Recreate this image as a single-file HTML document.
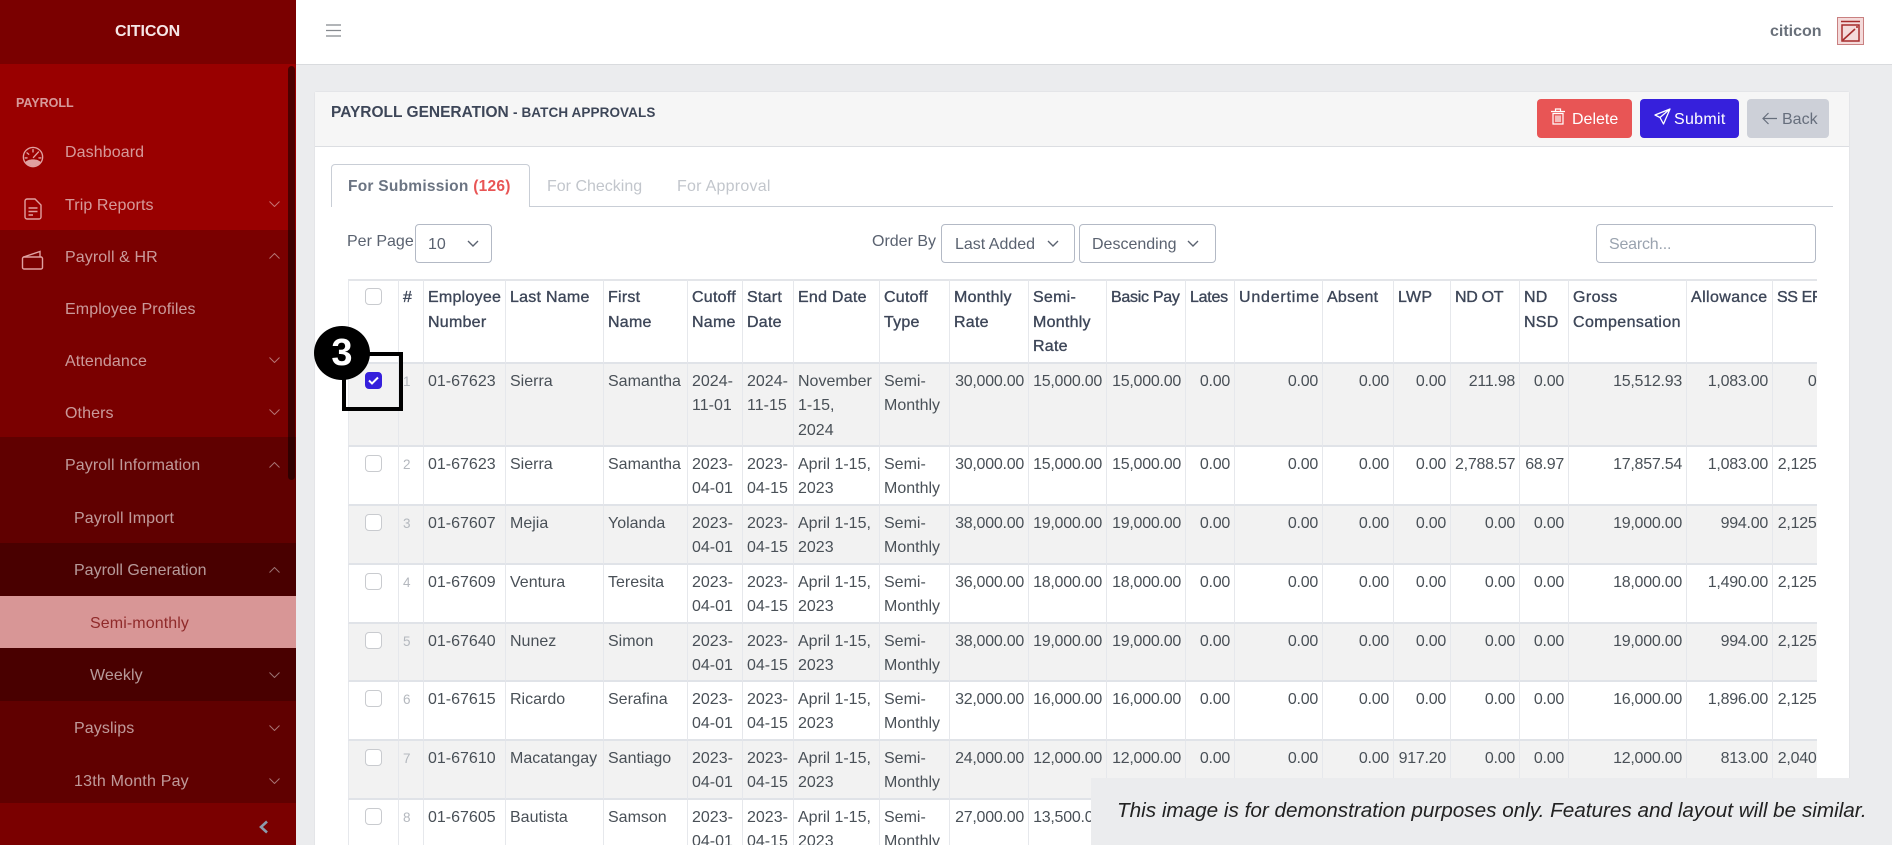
<!DOCTYPE html>
<html lang="en">
<head>
<meta charset="utf-8">
<title>Payroll Generation</title>
<style>
html,body{margin:0;padding:0;width:1892px;height:845px;overflow:hidden;background:#ebecee;font-family:"Liberation Sans",sans-serif;font-size:16px;color:#495057}
*{box-sizing:border-box}
#root{position:relative;width:1892px;height:845px;overflow:hidden;background:#ebecee}
.a{position:absolute}
.n{position:absolute;line-height:24px;white-space:nowrap;color:rgba(255,255,255,.6);letter-spacing:.1px}
.ch{position:absolute;left:269px;width:11px;height:6px;fill:none;stroke:rgba(255,255,255,.45);stroke-width:1}
.t{position:absolute;white-space:nowrap;line-height:24px}
.sel{position:absolute;top:224px;height:39px;border:1px solid #b3b9c5;border-radius:4px;background:#fff;line-height:39px;color:#5a6270;white-space:nowrap}
.sel svg{position:absolute;top:15px;width:12px;height:7px;fill:none;stroke:#5a6270;stroke-width:1.4}
.btn{position:absolute;top:99px;height:39px;border-radius:4px;line-height:41px;white-space:nowrap}
table{border-collapse:separate;border-spacing:0;table-layout:fixed;width:1495px;font-size:16px;line-height:24.7px;color:#495057}
td,th{padding:5.5px 4px 0;vertical-align:top;text-align:left;white-space:nowrap;overflow:hidden;border-right:1px solid #e6e8ec;border-bottom:2px solid #e0e3e8}
th{padding-top:5px;font-weight:400;color:#3d4658;-webkit-text-stroke:.35px #3d4658;letter-spacing:.25px;border-top:2px solid #e3e5e9}
tbody tr:nth-child(odd){background:#f2f2f2}
td.r{text-align:right;letter-spacing:-.25px}
td.i{font-size:13.5px;color:#b4b8be}
td.c,th.c{padding:0;border-left:1px solid #e6e8ec}
.cb{display:block;width:17px;height:17px;margin:8px 0 0 15.5px;border:1.3px solid #c9cbcf;border-radius:4px;background:#fff}
th .cb{margin-top:7px}
.cb.on{background:#3620dc;border-color:#3620dc;position:relative}
</style>
</head>
<body>
<div id="root">

<!-- top bar -->
<div class="a" style="left:296px;top:0;width:1596px;height:65px;background:#fff;border-bottom:1px solid #d9dbde"></div>
<svg class="a" style="left:326px;top:23px" width="15" height="15" viewBox="0 0 15 15" fill="none" stroke="#85898e" stroke-width="1.2"><path d="M0 2h15M0 7.500h15M0 13h15"/></svg>
<div class="t" style="left:1770px;top:20px;font-weight:700;color:#69707a">citicon</div>
<svg class="a" style="left:1837px;top:17px" width="27" height="28" viewBox="0 0 27 28" fill="none">
<rect x=".5" y=".5" width="26" height="27" fill="#f4dada" stroke="#c98080"/>
<path d="M4 4.500h19M5 8h17v16H5z" stroke="#a52a2a" stroke-width="1.500"/>
<path d="M6 23 L18 12" stroke="#a52a2a" stroke-width="1.600"/><circle cx="20" cy="10" r="1" fill="#a52a2a"/>
</svg>

<!-- sidebar -->
<div class="a" style="left:0;top:0;width:296px;height:845px;background:#7a0000;overflow:hidden">
  <div class="a" style="left:0;top:64px;width:296px;height:166px;background:#990000"></div>
  <div class="a" style="left:0;top:437px;width:296px;height:366px;background:#600000"></div>
  <div class="a" style="left:0;top:543px;width:296px;height:158px;background:#490000"></div>
  <div class="a" style="left:0;top:596px;width:296px;height:52px;background:#d89696"></div>
  <div class="a" style="left:288px;top:66px;width:7px;height:414px;border-radius:4px;background:rgba(0,0,0,.5)"></div>

  <div class="t" style="left:115px;top:20px;font-weight:700;color:#f5e6e6;font-size:16px;letter-spacing:-.1px">CITICON</div>
  <div class="t" style="left:16px;top:91px;font-weight:700;font-size:12.500px;color:rgba(255,255,255,.6)">PAYROLL</div>

  <svg class="a" style="left:21.500px;top:146px" width="22" height="22" viewBox="0 0 24 24" fill="none" stroke="#e0a0a0" stroke-width="1.500"><circle cx="12" cy="12" r="10.500"/><path d="M3.500 18C6 13.500 18 13.500 20.500 18 18.500 20.500 15.500 22 12 22S5.500 20.500 3.500 18z" fill="#e0a0a0" stroke="none"/><path d="M12 4v2.500M5.500 7.500l1.800 1.500M3.500 13h2M18 6.500L12.500 12.500M20.500 13h-2" stroke-linecap="round"/></svg>
  <svg class="a" style="left:24px;top:198px" width="18" height="22" viewBox="0 0 18 22" fill="none" stroke="#e0a0a0" stroke-width="1.400"><path d="M3 1h8l6 6v12a2 2 0 0 1-2 2H3a2 2 0 0 1-2-2V3a2 2 0 0 1 2-2z"/><path d="M4.500 10h9M4.500 13.500h9M4.500 17h4.500" stroke-width="1.600"/></svg>
  <svg class="a" style="left:21px;top:250px" width="23" height="20" viewBox="0 0 23 20" fill="none" stroke="#e0a0a0" stroke-width="1.400"><rect x="1.500" y="7" width="20" height="12" rx="1.500"/><path d="M2.500 7L19 1.500V7"/></svg>

  <div class="n" style="left:65px;top:141px">Dashboard</div>
  <div class="n" style="left:65px;top:194px">Trip Reports</div>
  <div class="n" style="left:65px;top:246px">Payroll &amp; HR</div>
  <div class="n" style="left:65px;top:298px">Employee Profiles</div>
  <div class="n" style="left:65px;top:350px">Attendance</div>
  <div class="n" style="left:65px;top:402px">Others</div>
  <div class="n" style="left:65px;top:454px">Payroll Information</div>
  <div class="n" style="left:74px;top:507px">Payroll Import</div>
  <div class="n" style="left:74px;top:559px;letter-spacing:0">Payroll Generation</div>
  <div class="n" style="left:90px;top:612px;color:#8f2a2a">Semi-monthly</div>
  <div class="n" style="left:90px;top:664px">Weekly</div>
  <div class="n" style="left:74px;top:717px">Payslips</div>
  <div class="n" style="left:74px;top:770px;letter-spacing:.2px">13th Month Pay</div>

  <svg class="ch" style="top:201px" viewBox="0 0 11 6"><path d="M.5.500l5 5 5-5"/></svg>
  <svg class="ch" style="top:253px" viewBox="0 0 11 6"><path d="M.5 5.500l5-5 5 5"/></svg>
  <svg class="ch" style="top:357px" viewBox="0 0 11 6"><path d="M.5.500l5 5 5-5"/></svg>
  <svg class="ch" style="top:409px" viewBox="0 0 11 6"><path d="M.5.500l5 5 5-5"/></svg>
  <svg class="ch" style="top:462px" viewBox="0 0 11 6"><path d="M.5 5.500l5-5 5 5"/></svg>
  <svg class="ch" style="top:567px" viewBox="0 0 11 6"><path d="M.5 5.500l5-5 5 5"/></svg>
  <svg class="ch" style="top:672px" viewBox="0 0 11 6"><path d="M.5.500l5 5 5-5"/></svg>
  <svg class="ch" style="top:725px" viewBox="0 0 11 6"><path d="M.5.500l5 5 5-5"/></svg>
  <svg class="ch" style="top:778px" viewBox="0 0 11 6"><path d="M.5.500l5 5 5-5"/></svg>
  <svg class="a" style="left:258px;top:820px" width="11" height="14" viewBox="0 0 11 14" fill="none" stroke="#8b9bab" stroke-width="2.600"><path d="M9 1.500L3 7l6 5.500"/></svg>
</div>

<!-- card -->
<div class="a" style="left:314px;top:91px;width:1536px;height:754px;background:#fff;border:1px solid #e4e5e8;border-bottom:none;border-radius:3px 3px 0 0"></div>
<div class="a" style="left:315px;top:92px;width:1534px;height:55px;background:#f6f6f6;border-bottom:1px solid #dcdee2"></div>
<div class="t" style="left:331px;top:101px;font-weight:700;color:#3d4658;font-size:15.500px;letter-spacing:0">PAYROLL GENERATION <span style="font-size:13.500px;letter-spacing:.1px">- BATCH APPROVALS</span></div>

<div class="btn" style="left:1537px;width:95px;background:#e85555;color:#fff;padding-left:35px">Delete</div>
<svg class="a" style="left:1551px;top:108px" width="14" height="17" viewBox="0 0 14 17" fill="none" stroke="#fff" stroke-width="1.200"><path d="M0 3.500h14M4.500 3.500V1h5v2.500M2 5.500h10v10.500H2zM5 7.500v6.500M7 7.500v6.500M9 7.500v6.500"/></svg>
<div class="btn" style="left:1640px;width:99px;background:#3620dc;color:#fff;padding-left:34px;letter-spacing:.3px">Submit</div>
<svg class="a" style="left:1654px;top:108px" width="17" height="17" viewBox="0 0 17 17" fill="none" stroke="#fff" stroke-width="1.300" stroke-linejoin="round"><path d="M16 1L1 7l5 2.500L9.500 16zM16 1L6 9.500"/></svg>
<div class="btn" style="left:1747px;width:82px;background:#cdd0d8;color:#666e7c;padding-left:35px">Back</div>
<svg class="a" style="left:1762px;top:112px" width="15" height="13" viewBox="0 0 15 13" fill="none" stroke="#666e7c" stroke-width="1.200"><path d="M15 6.500H1M6.500 1L1 6.500 6.500 12"/></svg>

<!-- tabs -->
<div class="a" style="left:331px;top:206px;width:1502px;height:1px;background:#c9ced6"></div>
<div class="a" style="left:331px;top:164px;width:199px;height:43px;background:#fff;border:1px solid #c9ced6;border-bottom:none;border-radius:4px 4px 0 0"></div>
<div class="t" style="left:348px;top:175px;font-weight:700;color:#6b7482;font-size:15.500px;letter-spacing:.25px">For Submission <span style="color:#e85555">(126)</span></div>
<div class="t" style="left:547px;top:175px;color:#c2c6cc">For Checking</div>
<div class="t" style="left:677px;top:175px;color:#c2c6cc;letter-spacing:.25px">For Approval</div>

<!-- filters -->
<div class="t" style="left:347px;top:230px;color:#5a6270">Per Page</div>
<div class="sel" style="left:415px;width:77px;padding-left:12px">10<svg style="left:51px" viewBox="0 0 12 7"><path d="M1 1l5 5 5-5"/></svg></div>
<div class="t" style="left:872px;top:230px;color:#5a6270">Order By</div>
<div class="sel" style="left:941px;width:134px;padding-left:13px">Last Added<svg style="left:105px" viewBox="0 0 12 7"><path d="M1 1l5 5 5-5"/></svg></div>
<div class="sel" style="left:1079px;width:137px;padding-left:12px">Descending<svg style="left:107px" viewBox="0 0 12 7"><path d="M1 1l5 5 5-5"/></svg></div>
<div class="sel" style="left:1596px;top:224px;width:220px;padding-left:12px;color:#9aa3af;letter-spacing:-.2px">Search...</div>

<!-- table -->
<div class="a" style="left:348px;top:279px;width:1469px;height:566px;overflow:hidden">
<table>
<colgroup>
<col style="width:51px"><col style="width:25px"><col style="width:82px"><col style="width:98px"><col style="width:84px"><col style="width:55px"><col style="width:51px"><col style="width:86px"><col style="width:70px"><col style="width:79px"><col style="width:78px"><col style="width:79px"><col style="width:49px"><col style="width:88px"><col style="width:71px"><col style="width:57px"><col style="width:69px"><col style="width:49px"><col style="width:118px"><col style="width:86px"><col style="width:70px">
</colgroup>
<thead>
<tr style="height:85px"><th class="c"><span class="cb"></span></th><th>#</th><th>Employee<br>Number</th><th>Last Name</th><th>First<br>Name</th><th>Cutoff<br>Name</th><th>Start<br>Date</th><th>End Date</th><th>Cutoff<br>Type</th><th>Monthly<br>Rate</th><th>Semi-<br>Monthly<br>Rate</th><th style="letter-spacing:-.28px">Basic Pay</th><th style="letter-spacing:-.25px">Lates</th><th style="letter-spacing:.78px">Undertime</th><th>Absent</th><th>LWP</th><th style="letter-spacing:-.3px">ND OT</th><th>ND<br>NSD</th><th style="letter-spacing:.4px">Gross<br>Compensation</th><th style="letter-spacing:.4px">Allowance</th><th style="letter-spacing:-.4px">SS ER</th></tr>
</thead>
<tbody>
<tr style="height:83px"><td class="c"><span class="cb on"><svg class="a" style="left:2px;top:3px" width="11" height="9" viewBox="0 0 11 9" fill="none" stroke="#fff" stroke-width="2"><path d="M1 4.500l3 3 6-6"/></svg></span></td><td class="i">1</td><td>01-67623</td><td>Sierra</td><td>Samantha</td><td>2024-<br>11-01</td><td>2024-<br>11-15</td><td>November<br>1-15,<br>2024</td><td>Semi-<br>Monthly</td><td class="r">30,000.00</td><td class="r">15,000.00</td><td class="r">15,000.00</td><td class="r">0.00</td><td class="r">0.00</td><td class="r">0.00</td><td class="r">0.00</td><td class="r">211.98</td><td class="r">0.00</td><td class="r">15,512.93</td><td class="r">1,083.00</td><td class="r">0.00</td></tr>
<tr style="height:59px"><td class="c"><span class="cb"></span></td><td class="i">2</td><td>01-67623</td><td>Sierra</td><td>Samantha</td><td>2023-<br>04-01</td><td>2023-<br>04-15</td><td>April 1-15,<br>2023</td><td>Semi-<br>Monthly</td><td class="r">30,000.00</td><td class="r">15,000.00</td><td class="r">15,000.00</td><td class="r">0.00</td><td class="r">0.00</td><td class="r">0.00</td><td class="r">0.00</td><td class="r">2,788.57</td><td class="r">68.97</td><td class="r">17,857.54</td><td class="r">1,083.00</td><td class="r">2,125.00</td></tr>
<tr style="height:59px"><td class="c"><span class="cb"></span></td><td class="i">3</td><td>01-67607</td><td>Mejia</td><td>Yolanda</td><td>2023-<br>04-01</td><td>2023-<br>04-15</td><td>April 1-15,<br>2023</td><td>Semi-<br>Monthly</td><td class="r">38,000.00</td><td class="r">19,000.00</td><td class="r">19,000.00</td><td class="r">0.00</td><td class="r">0.00</td><td class="r">0.00</td><td class="r">0.00</td><td class="r">0.00</td><td class="r">0.00</td><td class="r">19,000.00</td><td class="r">994.00</td><td class="r">2,125.00</td></tr>
<tr style="height:59px"><td class="c"><span class="cb"></span></td><td class="i">4</td><td>01-67609</td><td>Ventura</td><td>Teresita</td><td>2023-<br>04-01</td><td>2023-<br>04-15</td><td>April 1-15,<br>2023</td><td>Semi-<br>Monthly</td><td class="r">36,000.00</td><td class="r">18,000.00</td><td class="r">18,000.00</td><td class="r">0.00</td><td class="r">0.00</td><td class="r">0.00</td><td class="r">0.00</td><td class="r">0.00</td><td class="r">0.00</td><td class="r">18,000.00</td><td class="r">1,490.00</td><td class="r">2,125.00</td></tr>
<tr style="height:58px"><td class="c"><span class="cb"></span></td><td class="i">5</td><td>01-67640</td><td>Nunez</td><td>Simon</td><td>2023-<br>04-01</td><td>2023-<br>04-15</td><td>April 1-15,<br>2023</td><td>Semi-<br>Monthly</td><td class="r">38,000.00</td><td class="r">19,000.00</td><td class="r">19,000.00</td><td class="r">0.00</td><td class="r">0.00</td><td class="r">0.00</td><td class="r">0.00</td><td class="r">0.00</td><td class="r">0.00</td><td class="r">19,000.00</td><td class="r">994.00</td><td class="r">2,125.00</td></tr>
<tr style="height:59px"><td class="c"><span class="cb"></span></td><td class="i">6</td><td>01-67615</td><td>Ricardo</td><td>Serafina</td><td>2023-<br>04-01</td><td>2023-<br>04-15</td><td>April 1-15,<br>2023</td><td>Semi-<br>Monthly</td><td class="r">32,000.00</td><td class="r">16,000.00</td><td class="r">16,000.00</td><td class="r">0.00</td><td class="r">0.00</td><td class="r">0.00</td><td class="r">0.00</td><td class="r">0.00</td><td class="r">0.00</td><td class="r">16,000.00</td><td class="r">1,896.00</td><td class="r">2,125.00</td></tr>
<tr style="height:59px"><td class="c"><span class="cb"></span></td><td class="i">7</td><td>01-67610</td><td>Macatangay</td><td>Santiago</td><td>2023-<br>04-01</td><td>2023-<br>04-15</td><td>April 1-15,<br>2023</td><td>Semi-<br>Monthly</td><td class="r">24,000.00</td><td class="r">12,000.00</td><td class="r">12,000.00</td><td class="r">0.00</td><td class="r">0.00</td><td class="r">0.00</td><td class="r">917.20</td><td class="r">0.00</td><td class="r">0.00</td><td class="r">12,000.00</td><td class="r">813.00</td><td class="r">2,040.00</td></tr>
<tr style="height:59px"><td class="c"><span class="cb"></span></td><td class="i">8</td><td>01-67605</td><td>Bautista</td><td>Samson</td><td>2023-<br>04-01</td><td>2023-<br>04-15</td><td>April 1-15,<br>2023</td><td>Semi-<br>Monthly</td><td class="r">27,000.00</td><td class="r">13,500.00</td><td class="r">13,500.00</td><td class="r">0.00</td><td class="r">0.00</td><td class="r">0.00</td><td class="r">0.00</td><td class="r">0.00</td><td class="r">0.00</td><td class="r">13,500.00</td><td class="r">900.00</td><td class="r">2,125.00</td></tr>
</tbody>
</table>
</div>

<!-- callout -->
<div class="a" style="left:342px;top:352px;width:61px;height:59px;border:4px solid #000"></div>
<div class="a" style="left:314px;top:326px;width:56px;height:54px;border-radius:50%;background:#000;color:#fff;font-weight:700;font-size:38px;line-height:54px;text-align:center">3</div>

<!-- note -->
<div class="a" style="left:1091px;top:778px;width:801px;height:67px;background:#ebecee"></div>
<div class="t" style="left:1117px;top:799px;font-style:italic;font-size:20.700px;color:#222">This image is for demonstration purposes only. Features and layout will be similar.</div>

</div>
</body>
</html>
